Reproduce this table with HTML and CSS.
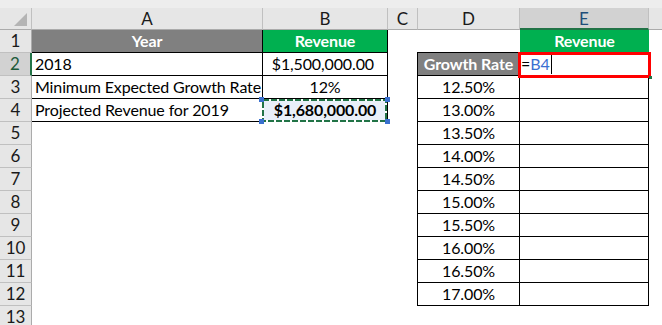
FILE: index.html
```html
<!DOCTYPE html>
<html>
<head>
<meta charset="utf-8">
<link rel="stylesheet" href="styles.css">
</head>
<body>
<div class="band"></div>
<div class="sheet">
  <div class="ch corner"><span class="tri"></span></div>
  <div class="ch">A</div>
  <div class="ch">B</div>
  <div class="ch">C</div>
  <div class="ch">D</div>
  <div class="ch ch-sel">E</div>
  <div class="ch ch-last"></div>

  <div class="rh">1</div>
  <div class="c hd grey bb br">Year</div>
  <div class="c hd green bb br">Revenue</div>
  <div class="c"></div>
  <div class="c"></div>
  <div class="c hd green">Revenue</div>
  <div class="c"></div>

  <div class="rh rh-sel">2</div>
  <div class="c bb br">2018</div>
  <div class="c bb br right">$1,500,000.00</div>
  <div class="c"></div>
  <div class="c hd grey dl dt bb br">Growth Rate</div>
  <div class="c e2 dt bb br"><span>=</span><span class="ref">B4</span><span class="cur"></span><span class="handle"></span></div>
  <div class="c"></div>

  <div class="rh">3</div>
  <div class="c bb br">Minimum Expected Growth Rate</div>
  <div class="c bb br mid">12%</div>
  <div class="c"></div>
  <div class="c dl bb br mid">12.50%</div>
  <div class="c bb br"></div>
  <div class="c"></div>

  <div class="rh">4</div>
  <div class="c bb br">Projected Revenue for 2019</div>
  <div class="c bb br mid bold copy">$1,680,000.00<svg class="ants" width="131" height="28" viewBox="0 0 131 28"><rect x="4" y="4" width="123" height="21" fill="none" stroke="#ffffff" stroke-width="2"/><rect x="4" y="4" width="123" height="21" fill="none" stroke="#217346" stroke-width="2" stroke-dasharray="6 2"/><rect x="0" y="1" width="5" height="5" fill="#3a70cf"/><rect x="126" y="1" width="5" height="5" fill="#3a70cf"/><rect x="0" y="23" width="5" height="5" fill="#3a70cf"/><rect x="126" y="23" width="5" height="5" fill="#3a70cf"/></svg></div>
  <div class="c"></div>
  <div class="c dl bb br mid">13.00%</div>
  <div class="c bb br"></div>
  <div class="c"></div>

  <div class="rh">5</div>
  <div class="c"></div><div class="c"></div><div class="c"></div>
  <div class="c dl bb br mid">13.50%</div>
  <div class="c bb br"></div>
  <div class="c"></div>

  <div class="rh">6</div>
  <div class="c"></div><div class="c"></div><div class="c"></div>
  <div class="c dl bb br mid">14.00%</div>
  <div class="c bb br"></div>
  <div class="c"></div>

  <div class="rh">7</div>
  <div class="c"></div><div class="c"></div><div class="c"></div>
  <div class="c dl bb br mid">14.50%</div>
  <div class="c bb br"></div>
  <div class="c"></div>

  <div class="rh">8</div>
  <div class="c"></div><div class="c"></div><div class="c"></div>
  <div class="c dl bb br mid">15.00%</div>
  <div class="c bb br"></div>
  <div class="c"></div>

  <div class="rh">9</div>
  <div class="c"></div><div class="c"></div><div class="c"></div>
  <div class="c dl bb br mid">15.50%</div>
  <div class="c bb br"></div>
  <div class="c"></div>

  <div class="rh">10</div>
  <div class="c"></div><div class="c"></div><div class="c"></div>
  <div class="c dl bb br mid">16.00%</div>
  <div class="c bb br"></div>
  <div class="c"></div>

  <div class="rh">11</div>
  <div class="c"></div><div class="c"></div><div class="c"></div>
  <div class="c dl bb br mid">16.50%</div>
  <div class="c bb br"></div>
  <div class="c"></div>

  <div class="rh">12</div>
  <div class="c"></div><div class="c"></div><div class="c"></div>
  <div class="c dl bb br mid">17.00%</div>
  <div class="c bb br"></div>
  <div class="c"></div>

  <div class="rh">13</div>
  <div class="c"></div><div class="c"></div><div class="c"></div>
  <div class="c"></div><div class="c"></div><div class="c"></div>
</div>
</body>
</html>
```

FILE: styles.css
```css
html, body {
  margin: 0;
  padding: 0;
  background: #ffffff;
  overflow: hidden;
}

body {
  font-family: Lato, "Noto Sans", sans-serif;
  font-size: 16px;
  color: #000000;
}

.band {
  height: 8px;
  background: #ededed;
}

.sheet {
  display: grid;
  grid-template-columns: 32px 231px 125px 30px 102px 129px 1fr;
  grid-template-rows: 22px repeat(13, 23px);
}

.ch {
  box-sizing: border-box;
  background: #e6e6e6;
  border-right: 1px solid #c0c0c0;
  border-bottom: 1px solid #ababab;
  text-align: center;
  line-height: 21px;
  font-size: 17px;
  color: #1a1a1a;
}

.corner {
  position: relative;
}

.tri {
  position: absolute;
  right: 4px;
  bottom: 3px;
  width: 0;
  height: 0;
  border-left: 13px solid transparent;
  border-bottom: 13px solid #b4b4b4;
}

.ch-sel {
  background: #d2d2d2;
  border-bottom: 2px solid #217346;
  color: #1f4e79;
}

.ch-last {
  border-right: none;
}

.rh {
  box-sizing: border-box;
  background: #e6e6e6;
  border-right: 1px solid #ababab;
  border-bottom: 1px solid #c0c0c0;
  text-align: center;
  line-height: 22px;
  font-size: 17px;
  color: #1a1a1a;
}

.rh-sel {
  background: #d2d2d2;
  border-right: 2px solid #217346;
  color: #1e5b3a;
}

.c {
  box-sizing: border-box;
  line-height: 22px;
  padding: 0 3px;
  white-space: nowrap;
  overflow: visible;
  letter-spacing: -0.12px;
}

.bb { border-bottom: 1px solid #000000; }
.br { border-right: 1px solid #000000; }
.dl { margin-left: -1px; border-left: 1px solid #000000; }
.dt { margin-top: -1px; border-top: 1px solid #000000; }

.right { text-align: right; padding-right: 13px; }
.mid { text-align: center; }
.bold { font-weight: 700; }

.hd {
  font-weight: 700;
  color: #ffffff;
  text-align: center;
}

.grey { background: #808080; }
.green { background: #00b050; }

.copy {
  position: relative;
  background: #e9eff9;
}

.ants {
  position: absolute;
  left: -4px;
  top: -3px;
}

.e2 {
  position: relative;
  padding-left: 1px;
}

.e2::after {
  content: "";
  position: absolute;
  left: -2px;
  top: -1px;
  right: -3px;
  bottom: -3px;
  border: 3px solid #ff0000;
}

.handle {
  position: absolute;
  right: -4px;
  bottom: -4px;
  width: 3px;
  height: 3px;
  background: #217346;
  z-index: 1;
}

.ref { color: #3a6fd1; }

.cur {
  display: inline-block;
  width: 1px;
  height: 19px;
  margin-left: 1px;
  background: #000000;
  vertical-align: -4px;
}
```
